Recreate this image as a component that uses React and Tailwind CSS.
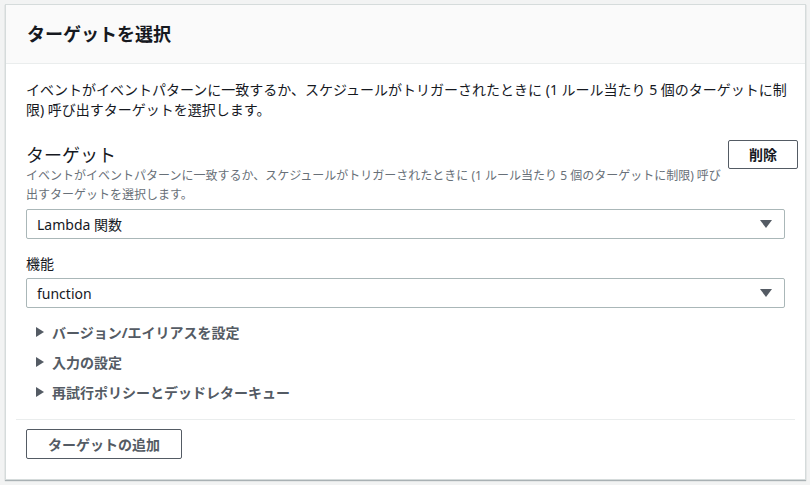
const font = { fontFamily: '"Noto Sans", "Noto Sans CJK JP", sans-serif' };

const Caret = () => (
  <svg width="12" height="8" viewBox="0 0 12 8" className="shrink-0">
    <path d="M0 0h12L6 8z" fill="#545b64" />
  </svg>
);

const Expander = ({ label }) => (
  <div className="flex items-center h-[30px] pl-[10px] text-[14px] font-bold text-[#545b64]">
    <svg width="8" height="10" viewBox="0 0 8 10" className="mr-[8px]">
      <path d="M0 0l8 5-8 5z" fill="#545b64" />
    </svg>
    {label}
  </div>
);

const SelectBox = ({ value }) => (
  <div className="flex items-center justify-between h-[30px] border border-[#aab7b8] rounded-[2px] pl-[10px] pr-[12px] text-[14px] text-[#16191f]">
    <span>{value}</span>
    <Caret />
  </div>
);

export default function App() {
  return (
    <div className="w-[810px] h-[485px] bg-[#f2f3f3] pt-[4px] pl-[5px] pr-[4px]" style={font}>
      <div className="bg-white border border-[#d5dbdb] shadow-[0_1px_1px_0_rgba(0,28,36,0.3)] h-[476px]">
        {/* header */}
        <div className="h-[59px] bg-[#fafafa] border-b border-[#eaeded] flex items-center px-[21px]">
          <h2 className="text-[18px] font-bold text-[#16191f]">ターゲットを選択</h2>
        </div>

        <div className="px-[20px] pt-[16px]">
          <p className="text-[14px] leading-[20px] text-[#16191f] mr-[-8px]">
            イベントがイベントパターンに一致するか、スケジュールがトリガーされたときに (1 ルール当たり 5 個のターゲットに制限) 呼び出すターゲットを選択します。
          </p>

          <div className="flex justify-between mt-[20px] mr-[-13px]">
            <div className="pt-[4px] w-[700px]">
              <div className="text-[18px] leading-[22px] text-[#16191f]">ターゲット</div>
              <div className="text-[12px] leading-[19px] text-[#687078]">
                イベントがイベントパターンに一致するか、スケジュールがトリガーされたときに (1 ルール当たり 5 個のターゲットに制限) 呼び出すターゲットを選択します。
              </div>
            </div>
            <button className="w-[70px] h-[29px] border border-[#545b64] rounded-[2px] text-[14px] font-bold text-[#16191f] bg-white">削除</button>
          </div>

          <div className="mt-[5px]">
            <SelectBox value="Lambda 関数" />
          </div>

          <div className="mt-[15px] text-[14px] leading-[20px] text-[#16191f]">機能</div>
          <div className="mt-[4px]">
            <SelectBox value="function" />
          </div>

          <div className="mt-[9px]">
            <Expander label="バージョン/エイリアスを設定" />
            <Expander label="入力の設定" />
            <Expander label="再試行ポリシーとデッドレターキュー" />
          </div>
        </div>

        <div className="mx-[10px] mt-[12px] border-t border-[#eaeded]" />

        <div className="px-[20px] pt-[9px]">
          <button className="w-[156px] h-[30px] border border-[#545b64] rounded-[2px] text-[14px] font-bold text-[#545b64] bg-white">ターゲットの追加</button>
        </div>
      </div>
    </div>
  );
}
